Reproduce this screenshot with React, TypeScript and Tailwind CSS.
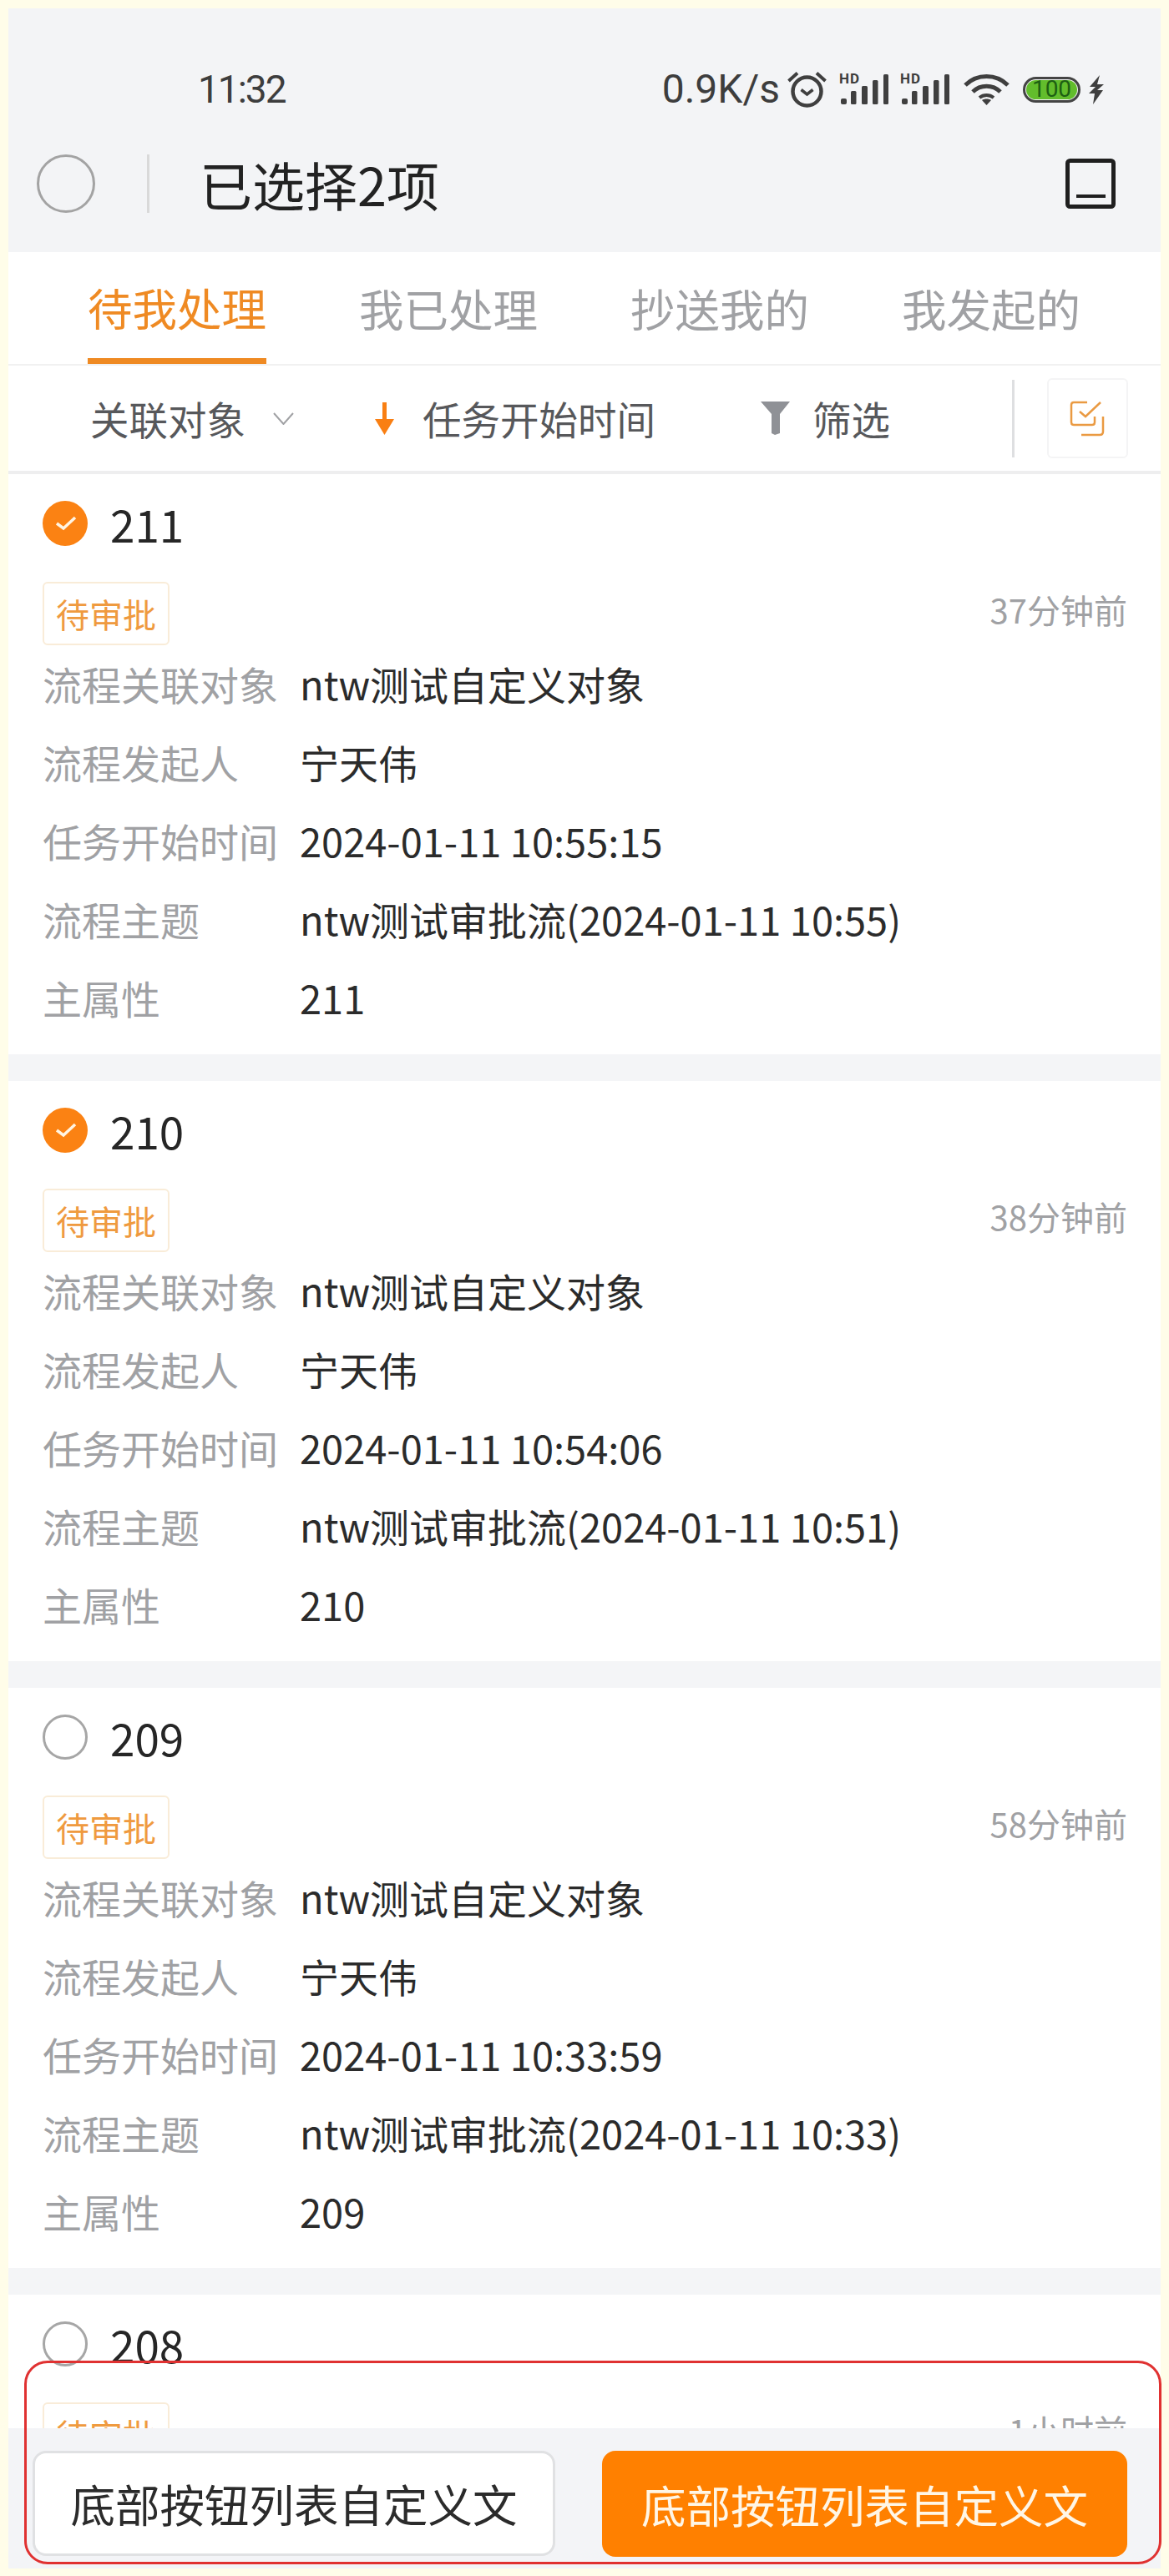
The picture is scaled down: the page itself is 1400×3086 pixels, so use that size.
import React from "react";

const cards = [
  { id: "211", checked: true, ago: "37分钟前", start: "2024-01-11 10:55:15", topic: "ntw测试审批流(2024-01-11 10:55)" },
  { id: "210", checked: true, ago: "38分钟前", start: "2024-01-11 10:54:06", topic: "ntw测试审批流(2024-01-11 10:51)" },
  { id: "209", checked: false, ago: "58分钟前", start: "2024-01-11 10:33:59", topic: "ntw测试审批流(2024-01-11 10:33)" },
  { id: "208", checked: false, ago: "1小时前", start: "", topic: "" },
];

function SignalIcon() {
  return (
    <div className="relative h-[37px] w-[60px]">
      <span className="absolute left-0 top-[-3px] text-[17px] font-bold leading-none tracking-[1px]">HD</span>
      <svg width="60" height="37" viewBox="0 0 60 37" fill="#3f3f3f" aria-hidden>
        <rect x="2" y="29" width="7" height="7" rx="2" />
        <rect x="14" y="20" width="6.5" height="16" rx="1.5" />
        <rect x="27" y="14" width="7" height="22" rx="1.5" />
        <rect x="40" y="7" width="6.5" height="29" rx="1.5" />
        <rect x="53" y="0" width="6" height="36" rx="1.5" />
      </svg>
    </div>
  );
}

function StatusIcons() {
  return (
    <div className="flex items-center">
      <svg className="ml-[9px]" width="47" height="44" viewBox="0 0 47 44" fill="none" stroke="#3f3f3f" aria-hidden>
        <circle cx="23.5" cy="24.5" r="17" strokeWidth="4.5" />
        <path d="M16.5 22.5 L23.5 28 L30.5 22.5" strokeWidth="3.5" />
        <path d="M1.5 12 L12 2.5 M35 2.5 L45.5 12" strokeWidth="4" />
      </svg>
      <div className="ml-[15px]"><SignalIcon /></div>
      <div className="ml-[13px]"><SignalIcon /></div>
      <svg className="ml-[16px]" width="55" height="40" viewBox="0 0 55 40" fill="none" stroke="#3f3f3f" strokeWidth="5" aria-hidden>
        <path d="M2 15 C16 1 39 1 53 15" />
        <path d="M11 23 C20 14 35 14 44 23" />
        <path d="M19 30 C24 26 31 26 36 30" strokeWidth="4" />
        <path d="M22 33 L27.5 39 L33 33 C30 31 25 31 22 33 Z" fill="#3f3f3f" stroke="none" />
      </svg>
      <div className="relative ml-[16px] flex h-[31px] w-[69px] items-center justify-center rounded-full border-[3px] border-[#444444] bg-[#f3f4f6]">
        <span className="absolute inset-[1px] rounded-full bg-[#62bd2c]" />
        <span className="relative text-[28px] leading-none text-[#1d5f12]">100</span>
      </div>
      <svg className="ml-[10px]" width="18" height="35" viewBox="0 0 18 35" fill="#3f3f3f" aria-hidden>
        <path d="M13 0 L1 14 L8 14 L0 22 L7 22 L5 35 L17 18 L10 18 L18 11 L10 11 Z" />
      </svg>
    </div>
  );
}

function Header() {
  return (
    <div className="h-[292px] shrink-0 bg-[#f3f4f6] pt-[67px] text-[#3d3d3d]">
      <div className="flex h-[60px] items-center justify-between pl-[227px] pr-[68px] font-['Roboto',sans-serif]">
        <span className="text-[46px] leading-none tracking-[-2px]">11:32</span>
        <div className="flex items-center">
          <span className="text-[48px] leading-none">0.9K/s</span>
          <StatusIcons />
        </div>
      </div>
      <div className="flex items-start pt-[48px] pl-[34px] pr-[54px]">
        <div className="h-[70px] w-[70px] rounded-full border-[3px] border-[#a3a3a3]" />
        <div className="ml-[62px] h-[70px] w-[3px] bg-[#d9d9d9]" />
        <span className="ml-[60px] h-[70px] text-[63px] leading-[70px] text-[#222222]">已选择2项</span>
        <svg className="ml-auto mt-[5px]" width="60" height="60" viewBox="0 0 60 60" fill="none" stroke="#1f1f1f" strokeWidth="5" aria-hidden>
          <rect x="2.5" y="2.5" width="55" height="55" rx="3" />
          <path d="M13 45 H48" strokeWidth="4" />
        </svg>
      </div>
    </div>
  );
}

function Tabs() {
  return (
    <div className="flex h-[136px] shrink-0 gap-[111px] border-b-2 border-[#f1f1f1] bg-white pl-[95px] text-[53.5px] leading-none text-[#a0a1a4]">
      <div className="flex h-[134px] items-center border-b-[7px] border-[#ef8a23] pt-[4px] text-[#ef8a23]">待我处理</div>
      <div className="flex h-[134px] items-center">我已处理</div>
      <div className="flex h-[134px] items-center">抄送我的</div>
      <div className="flex h-[134px] items-center">我发起的</div>
    </div>
  );
}

function FilterBar() {
  return (
    <div className="flex h-[130px] shrink-0 items-center border-b-4 border-[#eeeeef] bg-white pl-[98px] text-[46.5px] leading-none text-[#57585b]">
      <span>关联对象</span>
      <svg className="ml-[33px]" width="25" height="15" viewBox="0 0 25 15" fill="none" stroke="#a0a1a4" strokeWidth="2" aria-hidden>
        <path d="M1 1 L12.5 14 L24 1" />
      </svg>
      <svg className="ml-[96px]" width="25" height="39" viewBox="0 0 25 39" fill="#f97f13" aria-hidden>
        <rect x="10" y="0" width="5" height="24" />
        <path d="M1 20 H24 L12.5 39 Z" />
      </svg>
      <span className="ml-[33px]">任务开始时间</span>
      <svg className="ml-[126px]" width="35" height="40" viewBox="0 0 35 40" fill="#8f9196" aria-hidden>
        <path d="M0 0 H35 L23 15 V38 L17 40 L13 38 V15 Z" />
      </svg>
      <span className="ml-[27px]">筛选</span>
      <div className="ml-[146px] h-[93px] w-[3px] bg-[#dedfe1]" />
      <div className="ml-[39px] flex h-[96px] w-[97px] items-center justify-center rounded-[6px] border-2 border-[#f4f4f5]">
        <svg width="43" height="43" viewBox="0 0 43 43" fill="none" stroke="#ea9a42" strokeWidth="2.5" aria-hidden>
          <path d="M21 2 H5 Q2 2 2 5 V26 Q2 29 5 29 H27 Q30 29 30 26 V19" />
          <path d="M12 13 L19 19 L37 2" />
          <path d="M40 19 V37 Q40 41 36 41 H14" />
        </svg>
      </div>
    </div>
  );
}

function CheckMark({ checked }: { checked: boolean }) {
  if (!checked) return <div className="h-[54px] w-[54px] rounded-full border-[3px] border-[#a6a6a6]" />;
  return (
    <svg width="54" height="54" viewBox="0 0 54 54" aria-hidden>
      <circle cx="27" cy="27" r="27" fill="#fb8213" />
      <path d="M17 27 L25 33 L39 20" fill="none" stroke="#fff4e3" strokeWidth="3.5" />
    </svg>
  );
}

function Row({ label, value }: { label: string; value: string }) {
  return (
    <div className="flex h-[94px] items-center">
      <span className="w-[308px] shrink-0 text-[#a0a1a4]">{label}</span>
      <span className="text-[#2b2b2b]">{value}</span>
    </div>
  );
}

function Card({ id, checked, ago, start, topic }: (typeof cards)[number]) {
  return (
    <div className="mb-[32px] h-[695px] shrink-0 bg-white pl-[41px] pr-[40px] pt-[32px]">
      <div className="flex h-[54px] items-center">
        <CheckMark checked={checked} />
        <span className="ml-[27px] text-[53px] leading-none text-[#262626]">{id}</span>
      </div>
      <div className="mt-[43px] flex items-center justify-between">
        <div className="flex h-[76px] w-[152px] items-center justify-center rounded-[6px] border-2 border-[#f9ecd8] text-[40px] leading-none text-[#ef9a3f]">
          待审批
        </div>
        <span className="pb-[10px] text-[40px] leading-none text-[#a0a1a4]">{ago}</span>
      </div>
      {start && (
        <div className="mt-[-2px] text-[47px] leading-none">
          <Row label="流程关联对象" value="ntw测试自定义对象" />
          <Row label="流程发起人" value="宁天伟" />
          <Row label="任务开始时间" value={start} />
          <Row label="流程主题" value={topic} />
          <Row label="主属性" value={id} />
        </div>
      )}
    </div>
  );
}

export default function App() {
  return (
    <div className="relative h-[3086px] w-[1400px] overflow-hidden bg-[#fffde9] px-[10px] pt-[10px] font-['Noto_Sans_CJK_SC',sans-serif]">
      <div className="flex h-[3067px] flex-col bg-[#f4f5f7]">
        <Header />
        <Tabs />
        <FilterBar />
        <div className="flex min-h-0 flex-1 flex-col overflow-hidden">
          {cards.map((c) => (
            <Card key={c.id} {...c} />
          ))}
        </div>
        <div className="flex h-[168px] shrink-0 gap-[56px] bg-[#f3f4f7] pl-[29px] pt-[27px] text-[53.5px] leading-none">
          <button className="h-[126px] w-[626px] rounded-[16px] border-[3px] border-[#e0e1e3] bg-white text-[#2b2b2b]">底部按钮列表自定义文</button>
          <button className="h-[127px] w-[629px] rounded-[16px] bg-[#ff8000] text-[#fff6e6]">底部按钮列表自定义文</button>
        </div>
      </div>
      {/* annotation ring drawn over the bottom bar */}
      <div className="pointer-events-none absolute left-[29px] top-[2828px] h-[244px] w-[1362px] rounded-[28px] border-[3px] border-[#e03131]" />
    </div>
  );
}
